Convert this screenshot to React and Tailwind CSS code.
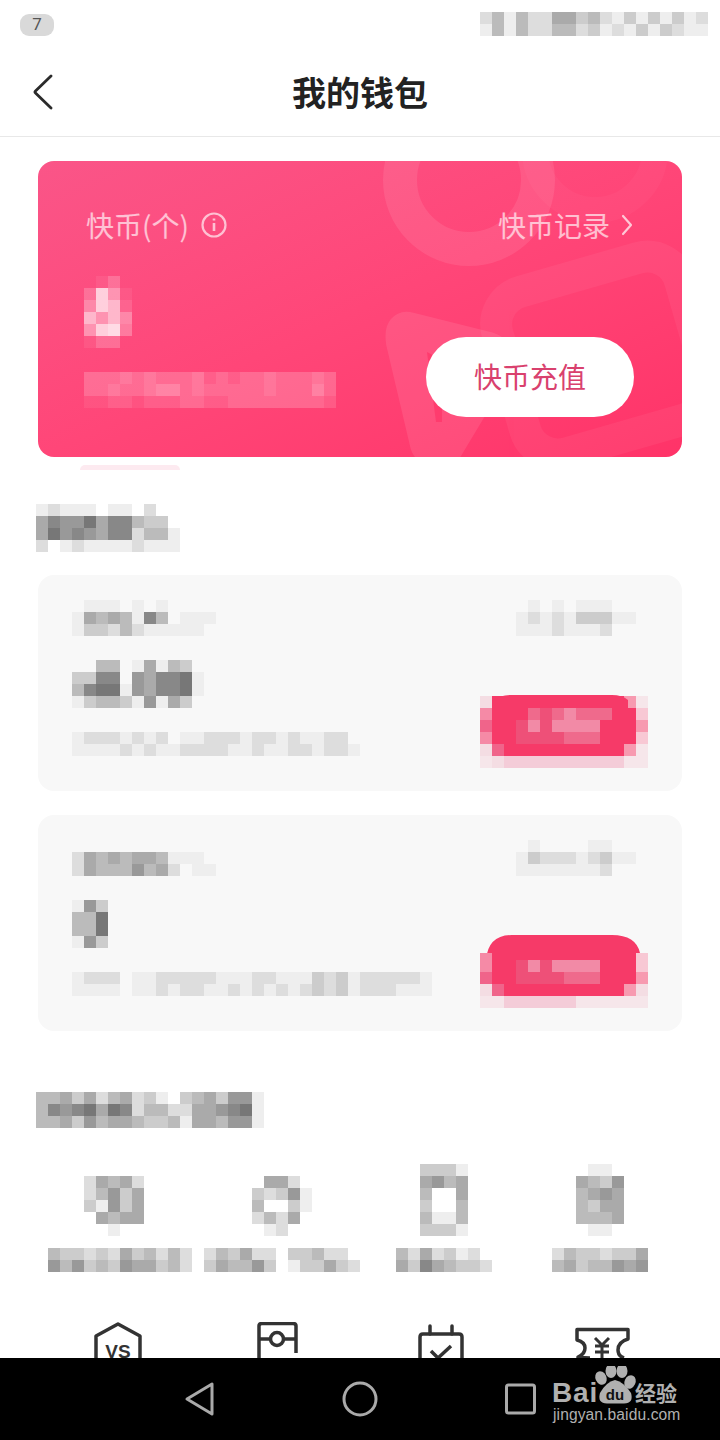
import React from 'react';

const CJK = { fontFamily: '"Noto Sans CJK SC", "Noto Sans", sans-serif' };

// colours of the pink mosaic buttons, one letter per cell
const BUTTON_COLORS = {
  r: '#f63a68', a: '#f58aa6', b: '#f0648a', c: '#f8c8d4', d: '#f4dde3', e: '#f79ab0',
  g: '#ee5078', h: '#ef6a8c', i: '#f28aa6', j: '#f4ccd8', k: '#f6e6ea',
};

// Pixelated (censored) block. Each char of a row is one 12px cell:
// hex digit = grey value, 'f' = nothing. With tint the digit is white opacity instead.
function Mosaic({ rows, tint, colors, top = 0, className = '', children }) {
  const cols = Math.max(...rows.map(r => r.length));
  const w = cols * 12;
  const h = rows.length * 12 + top;
  return (
    <svg width={w} height={h} viewBox={`0 0 ${w} ${h}`} className={`block shrink-0 ${className}`}>
      {rows.map((row, y) =>
        row.split('').map((c, x) => {
          const key = `${x}-${y}`;
          const props = { key, x: x * 12, y: y * 12 + top, width: 12, height: 12 };
          if (colors) return <rect {...props} fill={colors[c]} />;
          if (tint) return <rect {...props} fill="#fff" fillOpacity={parseInt(c, 16) / 15} />;
          if (c === 'f') return null;
          return <rect {...props} fill={`#${c}${c}${c}`} />;
        })
      )}
      {children}
    </svg>
  );
}

function CardShapes() {
  return (
    <svg className="absolute inset-0" width="644" height="296" viewBox="38 161 644 296" fill="none">
      <circle cx="595" cy="150" r="60" stroke="#fff" strokeOpacity="0.03" strokeWidth="26" />
      <circle cx="469" cy="180" r="69" stroke="#fff" strokeOpacity="0.09" strokeWidth="34" />
      <rect x="506" y="272" width="190" height="168" rx="34" transform="rotate(-16 600 350)" stroke="#fff" strokeOpacity="0.05" strokeWidth="32" />
      <g opacity="0.09">
        <path d="M408 330 L488 350 Q500 354 494 366 L446 446 Q436 458 428 444 L404 342 Q402 328 408 330 Z" fill="#fff" stroke="#fff" strokeWidth="36" strokeLinejoin="round" />
      </g>
      <path d="M427 352 L442 360 V422 L436 422 Z" fill="#ff3c6e" />
    </svg>
  );
}

function WalletCard({ label, labelRight, amount, desc, button, className, topClass }) {
  return (
    <div className={`h-[216px] mx-[38px] rounded-2xl bg-[#f8f8f8] pl-[34px] pr-[34px] pt-[25px] ${className}`}>
      <div className={`flex justify-between ${topClass}`}>
        <Mosaic rows={label} />
        <Mosaic rows={labelRight} className="mr-[12px]" />
      </div>
      <div className="flex justify-between items-start mt-[24px]">
        <div>
          <Mosaic rows={amount} />
          <Mosaic rows={desc} className="mt-[24px]" />
        </div>
        {button}
      </div>
    </div>
  );
}

function ServiceItem({ width, iconClass, icon, label }) {
  return (
    <div className={`flex flex-col ${width}`}>
      <Mosaic rows={icon} className={iconClass} />
      <Mosaic rows={label} className="mt-[12px]" />
    </div>
  );
}

function BaiduMark() {
  return (
    <svg className="absolute left-[548px] top-[8px]" width="140" height="70" viewBox="548 1366 140 70">
      <g fill="#b0b0b0">
        <text x="552" y="1402" fontFamily="Liberation Sans, sans-serif" fontWeight="700" fontSize="28" letterSpacing="0.8">Bai</text>
        <ellipse cx="601" cy="1378" rx="5.5" ry="7" transform="rotate(-25 601 1378)" />
        <ellipse cx="611" cy="1371" rx="5.5" ry="7" />
        <ellipse cx="622" cy="1371" rx="5.5" ry="7" />
        <ellipse cx="630" cy="1382" rx="5.5" ry="7" transform="rotate(25 630 1382)" />
        <path d="M600 1393 Q606 1382 615 1380 Q624 1382 631 1393 Q634 1403 624 1403.500 H607 Q597 1403 600 1393 Z" />
        <text x="635" y="1401" fontFamily="Noto Sans CJK SC, sans-serif" fontWeight="700" fontSize="21">经验</text>
        <text x="553" y="1420" fontFamily="Liberation Sans, sans-serif" fontSize="15.6" letterSpacing="0.1">jingyan.baidu.com</text>
      </g>
      <text x="615" y="1400" textAnchor="middle" fill="#111" fontFamily="Liberation Sans, sans-serif" fontWeight="700" fontSize="15">du</text>
    </svg>
  );
}

const button1 = (
  <Mosaic
    top={1}
    className="mt-[35px]"
    colors={BUTTON_COLORS}
    rows={[
      'drrrrrrrrrrrek',
      'arrrhghihhhrrc',
      'brrgigiiiirrre',
      'arrgggghhhrrrc',
      'dbrrrrrrrrrrek',
      'kdjjjjjjjjjjkk',
    ]}
  >
    <path d="M12 6 Q20 0 30 0 H132 Q142 0 148 5 V13 H12 Z" fill="#f63a68" />
  </Mosaic>
);

const button2 = (
  <Mosaic
    top={25}
    className="mt-[35px]"
    colors={BUTTON_COLORS}
    rows={[
      'arrgigiiiirrrc',
      'brrgggghhhrrre',
      'dbrrrrrrrrrred',
      'kkjjjjjjkkkkkk',
    ]}
  >
    <path d="M6 25 Q8 0 32 0 H132 Q156 0 160 18 L168 18 V25 Z" fill="#f63a68" />
    <rect x="0" y="18" width="12" height="7" fill="#f58aa6" />
    <rect x="156" y="18" width="12" height="7" fill="#f8c8d4" />
  </Mosaic>
);

export default function App() {
  return (
    <div className="w-[720px] h-[1440px] flex flex-col overflow-hidden bg-white" style={CJK}>
      <main className="flex-1 min-h-0 overflow-hidden">
        {/* status bar */}
        <div className="h-[48px] flex items-start pl-[20px] pr-[12px]">
          <div className="mt-[14px] w-[34px] h-[22px] rounded-[9px] bg-[#d9d9d9] flex items-center justify-center text-[17px] text-[#555]" style={{ fontFamily: 'Roboto, sans-serif' }}>7</div>
          <Mosaic
            className="ml-auto mt-[12px]"
            rows={[
              'dbebddaacbdecececed',
              'ebebddbbdcedececdee',
            ]}
          />
        </div>

        {/* title bar */}
        <div className="h-[89px] grid grid-cols-[1fr_auto_1fr] items-center border-b border-[#e8e8e8]">
          <svg className="ml-[33px]" width="20" height="36" viewBox="0 0 20 36" fill="none">
            <path d="M18 2 L2.500 17 Q1.500 18 2.500 19 L18 34" stroke="#2b2b2b" strokeWidth="2.800" strokeLinecap="round" strokeLinejoin="round" />
          </svg>
          <div className="text-[34px] leading-none font-bold text-[#222]">我的钱包</div>
          <div />
        </div>

        {/* balance card */}
        <div className="relative h-[296px] mx-[38px] mt-[24px] rounded-2xl overflow-hidden bg-gradient-to-br from-[#fa5588] via-[#ff4678] to-[#ff3368]">
          <CardShapes />
          <div className="relative pl-[46px] pr-[48px] pt-[44px]">
            <div className="flex items-center justify-between h-[40px] pl-[2px] text-[28px] text-white/65">
              <div className="flex items-center">
                <span>快币(个)</span>
                <svg className="ml-[11px]" width="28" height="28" viewBox="0 0 28 28" fill="none" stroke="#fff" strokeOpacity="0.65" strokeWidth="2.2">
                  <circle cx="14" cy="14" r="11.5" />
                  <path d="M14 12 V20" strokeWidth="2.6" />
                  <path d="M14 7.5 V9.6" strokeWidth="2.6" />
                </svg>
              </div>
              <div className="flex items-center">
                <span>快币记录</span>
                <svg className="ml-[11px] mr-[1px]" width="12" height="22" viewBox="0 0 12 22" fill="none" stroke="#fff" strokeOpacity="0.7" strokeWidth="2.2" strokeLinecap="round" strokeLinejoin="round">
                  <path d="M2 2 L10 11 L2 20" />
                </svg>
              </div>
            </div>
            <div className="flex justify-between items-start mt-[31px]">
              <div>
                <Mosaic tint rows={['0130', '3b61', '5b92', '9695', '6bc4', '1330']} />
                <Mosaic
                  tint
                  className="mt-[24px]"
                  rows={[
                    '333434333423233433343',
                    '334334553433333433353',
                    '112212223322333333332',
                  ]}
                />
              </div>
              <div className="mt-[61px] w-[208px] h-[80px] rounded-[40px] bg-white flex items-center justify-center text-[28px] leading-none pb-[2px] text-[#d9416e]">
                快币充值
              </div>
            </div>
          </div>
        </div>
        <div className="mt-[8px] ml-[80px] w-[100px] h-[5px] rounded-t-full bg-[#fdeaf0]" />

        {/* first section */}
        <Mosaic
          className="ml-[36px] mt-[34px]"
          rows={[
            'edeeefeefdff',
            'a8997a88bccf',
            'a7989a88dbbe',
            'dfedeeeedeee',
          ]}
        />
        <WalletCard
          className="mt-[23px]"
          label={['feeefefeffff', 'eababe8bfeee', 'eccdbdeeeeef']}
          labelRight={['fefefeeeff', 'ededecccee', 'eeedeeedff']}
          amount={['ffbbfeaebcf', 'cc88f9a887e', 'b877e9a887e', 'ecbbce9eacf']}
          desc={['edddededfeedddeddedeeddf', 'eeeededeeddddeedeeddedde']}
          button={button1}
        />
        <WalletCard
          className="mt-[24px]"
          topClass="items-end"
          label={['dababaabeeef', 'dabbb9badfeef']}
          labelRight={['feffffeeff', 'ecdddedcee', 'eeeeeeedff']}
          amount={['e9cf', 'bb7f', 'bb7f', 'e9cf']}
          desc={['edddfeedddddeeeddeeecdceddddde', 'eeeefeededdeededededcdcedddeee']}
          button={button2}
        />

        {/* second section */}
        <Mosaic
          className="ml-[36px] mt-[61px]"
          rows={[
            'bbacadbadcefcbac99e',
            'b8987a78dbbddaa987e',
            'bbac9baabccbeaab99e',
          ]}
        />
        <div className="flex pl-[48px] mt-[36px]">
          <ServiceItem
            width="w-[156px]"
            iconClass="ml-[36px]"
            icon={['fffff', 'dabad', 'db9ca', 'ce9ca', 'fabaa', 'ffeff']}
            label={['bccdcdacbdbd', '9b9cbc9aacbd']}
          />
          <ServiceItem
            width="w-[192px]"
            iconClass="ml-[48px]"
            icon={['fffff', 'faadf', 'cdc9e', 'bffce', 'dbdaf', 'fedff']}
            label={['dbcaddfccbddf', 'cabb9cfeccacd']}
          />
          <ServiceItem
            width="w-[156px]"
            iconClass="ml-[12px]"
            icon={['fccce', 'fa9ba', 'fbffa', 'fcffb', 'fbeeb', 'fccce']}
            label={['bdadcedf', 'ac8abccd']}
          />
          <ServiceItem
            width="w-[108px]"
            iconClass="ml-[24px]"
            icon={['feef', 'abc9', 'ba9a', 'bcaa', 'bbba', 'feef']}
            label={['dbccdcca', 'bacbb9a9']}
          />
        </div>

        {/* icons cut off by the nav bar */}
        <svg className="block mt-[50px]" width="720" height="40" viewBox="0 1322 720 40" fill="none" stroke="#333" strokeWidth="3.5" strokeLinejoin="round">
          <path d="M96 1362 V1336 L118 1324 L140 1336 V1362" />
          <text x="118" y="1358" textAnchor="middle" fill="#333" stroke="none" fontFamily="Liberation Sans, sans-serif" fontWeight="700" fontSize="19">VS</text>
          <path d="M259 1362 V1326 Q259 1323.5 262 1323.5 H293 Q296 1323.5 296 1326 V1353" />
          <path d="M259 1339 H270 M284 1339 H296" />
          <circle cx="277" cy="1339" r="6.5" />
          <path d="M420 1362 V1337 Q420 1334 423 1334 H459 Q462 1334 462 1337 V1362" />
          <path d="M430 1326 V1334 M452 1326 V1334" strokeLinecap="round" />
          <path d="M431 1351 L438 1358 L451 1346" />
          <path d="M590 1358 Q585 1358 578 1357 Q585 1354 585 1348 Q585 1342 577 1340 V1329.5 H628 V1339 Q618 1342 618 1350 Q618 1356 624 1358" />
          <path d="M595 1338 L602 1345 L609 1338 M595 1346 H609 M595 1352 H609 M602 1345 V1362" strokeWidth="3" />
        </svg>
      </main>

      {/* android nav bar */}
      <nav className="relative h-[82px] shrink-0 bg-black">
        <svg width="560" height="82" viewBox="0 1358 560 82" fill="none" stroke="#aaa" strokeWidth="3" strokeLinejoin="round">
          <path d="M187 1399 L212 1384 V1414 Z" />
          <circle cx="360" cy="1399" r="16" />
          <rect x="506.500" y="1385" width="28" height="28" rx="2" />
        </svg>
        <BaiduMark />
      </nav>
    </div>
  );
}
